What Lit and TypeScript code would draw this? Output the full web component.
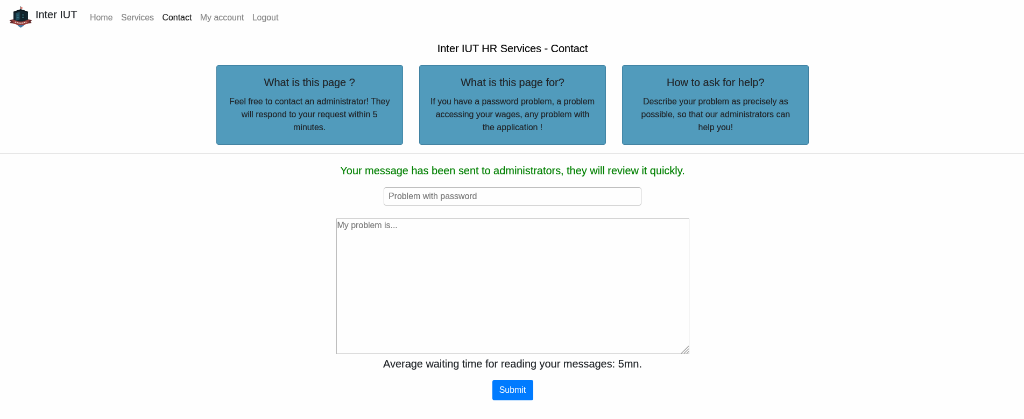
import { LitElement, html, css } from "lit";
import { customElement } from "lit/decorators.js";

const links = ["Home", "Services", "Contact", "My account", "Logout"];
const cards = [
  { title: "What is this page ?", lines: ["Feel free to contact an administrator! They", "will respond to your request within 5", "minutes."] },
  { title: "What is this page for?", lines: ["If you have a password problem, a problem", "accessing your wages, any problem with", "the application !"] },
  { title: "How to ask for help?", lines: ["Describe your problem as precisely as", "possible, so that our administrators can", "help you!"] },
];

@customElement("app-root")
export class AppRoot extends LitElement {
  static styles = css`
    :host { display: block; height: 419px; overflow: hidden; background: #fefefe; }
    * { box-sizing: border-box; }
    .page {
      width: 1904px;
      height: 779px;
      transform: scale(0.5381);
      transform-origin: 0 0;
      will-change: transform;
      background: #fefefe;
      color: #212529;
      font: 16px/24px "Liberation Sans", Arial, sans-serif;
      letter-spacing: -0.045px;
      -webkit-text-stroke: 0.2px;
    }
    .nav { display: flex; height: 63px; padding-left: 16px; }
    .logo { width: 45px; height: 45px; margin-top: 9px; flex: none; }
    .brand, .title, .card-title, .notice, .wait { font-size: 20px; line-height: 30px; font-weight: 400; }
    .brand { margin: 12px 0 0 5px; width: 101px; white-space: nowrap; }
    .links { display: flex; gap: 15.5px; padding-top: 21px; }
    .link { color: #868686; text-decoration: none; white-space: nowrap; }
    .active { color: #1a1a1a; }
    .title { margin: 12px 0 16px; padding-left: 1px; text-align: center; color: #000; }
    .cards { display: grid; grid-template-columns: repeat(3, 347.33px); gap: 30px; justify-content: center; padding-left: 1px; }
    .card { height: 148px; background: #519bbc; border: 1px solid #3e7f9f; border-radius: 4px; padding-top: 19px; text-align: center; }
    .card-title { line-height: 24px; margin: 0 0 12px; }
    .line { display: block; white-space: nowrap; }
    .rule { height: 1px; background: #e0e0e0; margin-top: 16px; }
    .form { display: flex; flex-direction: column; align-items: center; padding-left: 1px; }
    .notice { color: #008000; margin: 16px 0; height: 30px; }
    .subject, .message { font: inherit; letter-spacing: inherit; color: #212529; background: #fefefe; outline: none; display: block; margin: 0; }
    .subject::placeholder, .message::placeholder { color: #7b7b7b; opacity: 1; }
    .subject { width: 479px; height: 34px; border: 1px solid #bdbdbd; border-radius: 4px; padding: 0 8px; }
    .area { position: relative; width: 656px; height: 252px; margin-top: 24px; }
    .message { width: 100%; height: 100%; border: 1px solid #b4b4b4; padding: 0 1px; resize: none; overflow: hidden; }
    .grip { position: absolute; right: 1px; bottom: 1px; width: 15px; height: 15px; }
    .wait { margin: 3px 0 15px; }
    .submit { width: 76px; height: 38px; background: #007bff; color: #fff; border: 0; border-radius: 4px; font: inherit; letter-spacing: inherit; padding: 0; -webkit-text-stroke: 0; }
  `;

  render() {
    return html`<div class="page">
      <nav class="nav">
        <svg class="logo" viewBox="0 0 24 24">
          <path d="M12 1.5V6" stroke="#38464b" stroke-width=".7" />
          <path d="M12 2l2.4 1L12 4.2z" fill="#d75f52" />
          <path d="M4.8 7.3L8 5.6l4-1.3 4 1.3 3.2 1.7v9l-7.2 3-7.2-3z" fill="#14252e" />
          <path d="M7 8.3l4-1.3v7.5l-4 1.2z" fill="#214c5d" />
          <path d="M12.3 7.2l4.5 1.6v6.4l-4.5-1z" fill="#102027" />
          <path d="M8 10.2h2M8 12.5h2M13.4 10h2M13.4 12.3h2" stroke="#3a7280" stroke-width=".8" />
          <path d="M4.8 7.3L12 5l7.2 2.3" fill="none" stroke="#0a1318" />
          <path d="M8 18.5h8l-1.2 2.3L12 22.7l-2.800-1.900z" fill="#4579a5" />
          <path d="M.7 15l4.300-.6 1 4.200-5-.5 1.300-1.400zM23.300 15l-4.300-.6-1 4.200 5-.5-1.300-1.400z" fill="#642a2b" />
          <path d="M3.300 14.800l2.600.2c4 2 8.200 2 12.200 0l2.600-.2-1.600 3.700c-4.600 2.200-9.600 2.200-14.200 0z" fill="#963c3a" />
          <path d="M6.300 17c3.800 1.500 7.600 1.500 11.400 0" fill="none" stroke="#e8d5ce" stroke-width="1" stroke-dasharray="1.300 .5" />
        </svg>
        <span class="brand">Inter IUT</span>
        <div class="links">
          ${links.map((l) => html`<a class="link ${l === "Contact" ? "active" : ""}">${l}</a>`)}
        </div>
      </nav>
      <h1 class="title">Inter IUT HR Services - Contact</h1>
      <section class="cards">
        ${cards.map((c) => html`<article class="card">
          <h2 class="card-title">${c.title}</h2>
          ${c.lines.map((l) => html`<span class="line">${l}</span>`)}
        </article>`)}
      </section>
      <div class="rule"></div>
      <div class="form">
        <div class="notice">Your message has been sent to administrators, they will review it quickly.</div>
        <input class="subject" placeholder="Problem with password" />
        <div class="area">
          <textarea class="message" placeholder="My problem is..."></textarea>
          <svg class="grip" viewBox="0 0 15 15"><path d="M1 15L15 1M6 15l9-9M11 15l4-4" stroke="#999" stroke-width="1.3" /></svg>
        </div>
        <div class="wait">Average waiting time for reading your messages: 5mn.</div>
        <button class="submit">Submit</button>
      </div>
    </div>`;
  }
}
